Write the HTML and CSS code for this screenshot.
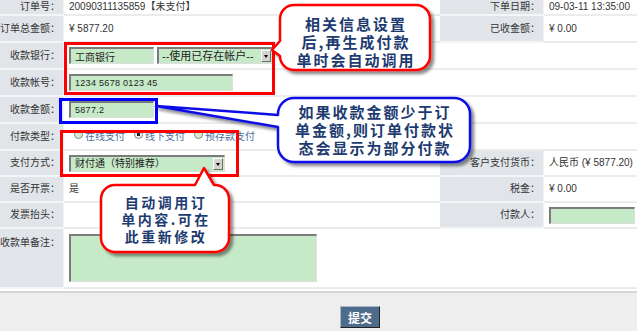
FILE: index.html
```html
<!DOCTYPE html>
<html lang="zh-CN">
	<head>
		<meta charset="UTF-8" />
		<title>收款单</title>
		<link rel="stylesheet" href="styles.css">
	</head>
	<body>
		<div class="page">
			<table class="form">
				<colgroup>
					<col class="col-label">
					<col class="col-value">
					<col class="col-label2">
					<col class="col-value2">
				</colgroup>
				<tr class="row-first">
					<th>订单号：</th>
					<td>20090311135859【未支付】</td>
					<th>下单日期：</th>
					<td>09-03-11 13:35:00</td>
				</tr>
				<tr>
					<th>订单总金额：</th>
					<td>¥ 5877.20</td>
					<th>已收金额：</th>
					<td>¥ 0.00</td>
				</tr>
				<tr>
					<th>收款银行：</th>
					<td colspan="3">
						<div class="bank-row">
							<input class="field field-bank" type="text" value="工商银行">
							<span class="select select-account"><span class="select-text">--使用已存在帐户--</span><span class="select-arrow"></span></span>
						</div>
					</td>
				</tr>
				<tr>
					<th>收款帐号：</th>
					<td colspan="3"><input class="field field-account mono" type="text" value="1234 5678 0123 45"></td>
				</tr>
				<tr>
					<th>收款金额：</th>
					<td colspan="3"><input class="field field-amount mono" type="text" value="5877.2"></td>
				</tr>
				<tr>
					<th>付款类型：</th>
					<td colspan="3">
						<div class="radios">
							<label class="radio"><input type="radio" name="paytype">在线支付</label>
							<label class="radio"><input type="radio" name="paytype" checked>线下支付</label>
							<label class="radio"><input type="radio" name="paytype">预存款支付</label>
						</div>
					</td>
				</tr>
				<tr class="row-short">
					<th>支付方式：</th>
					<td><span class="select select-method"><span class="select-text">财付通（特别推荐）</span><span class="select-arrow"></span></span></td>
					<th>客户支付货币：</th>
					<td>人民币 (¥ 5877.20)</td>
				</tr>
				<tr class="row-short">
					<th>是否开票：</th>
					<td>是</td>
					<th>税金：</th>
					<td>¥ 0.00</td>
				</tr>
				<tr class="row-short">
					<th>发票抬头：</th>
					<td></td>
					<th>付款人：</th>
					<td><input class="field field-payer" type="text" value=""></td>
				</tr>
				<tr class="row-note">
					<th>收款单备注：</th>
					<td colspan="3"><textarea class="field field-note"></textarea></td>
				</tr>
			</table>

			<div class="footer">
				<button class="btn-submit" type="button">提交</button>
			</div>

			<!-- highlight frames and callout bubbles drawn over the form -->
			<svg class="marks" width="637" height="331" viewBox="0 0 637 331">
				<defs>
					<filter id="shade" x="-10%" y="-10%" width="130%" height="140%">
						<feDropShadow dx="3" dy="3" stdDeviation="1.5" flood-color="#000" flood-opacity="0.45"/>
					</filter>
				</defs>
				<rect class="frame frame-red" x="65.5" y="43.5" width="208" height="50"/>
				<rect class="frame frame-blue" x="60.5" y="99.5" width="96" height="23"/>
				<rect class="frame frame-red" x="61.5" y="131.5" width="176" height="44"/>

				<path class="bubble bubble-red" filter="url(#shade)" d="M294,5 H416 A14,14 0 0 1 430,19 V56 A14,14 0 0 1 416,70 H294 A14,14 0 0 1 280,56 L272,50 L280,41 V19 A14,14 0 0 1 294,5 Z"/>
				<path class="bubble bubble-blue" filter="url(#shade)" d="M294,98 H454 A16,16 0 0 1 470,114 V146 A16,16 0 0 1 454,162 H294 A16,16 0 0 1 278,146 V127 L156,106 L278,115 V114 A16,16 0 0 1 294,98 Z"/>
				<path class="bubble bubble-red" filter="url(#shade)" d="M115,185 H195 L204,168 L214,185 H215 A14,14 0 0 1 229,199 V238 A14,14 0 0 1 215,252 H115 A14,14 0 0 1 101,238 V199 A14,14 0 0 1 115,185 Z"/>
			</svg>

			<div class="tip tip-top">相关信息设置<br>后,再生成付款<br>单时会自动调用</div>
			<div class="tip tip-amount">如果收款金额少于订<br>单金额,则订单付款状<br>态会显示为部分付款</div>
			<div class="tip tip-method">自动调用订<br>单内容.可在<br>此重新修改</div>
		</div>
	</body>
</html>
```

FILE: styles.css
```css
* {
	box-sizing: border-box;
}

body {
	margin: 0;
	font-family: "Liberation Sans", "Noto Sans CJK SC", sans-serif;
	font-size: 10px;
	color: #333;
	background: #fff;
}

.page {
	position: relative;
	width: 637px;
	height: 331px;
	overflow: hidden;
}

/* Form table */
.form {
	width: 637px;
	border-collapse: separate;
	border-spacing: 0;
	table-layout: fixed;
}

.col-label { width: 64px; }
.col-value { width: 376px; }
.col-label2 { width: 104px; }
.col-value2 { width: 93px; }

.form th,
.form td {
	height: 27px;
	padding: 0 0 0 5px;
	border-bottom: 2px solid #ececec;
	text-align: left;
	font-weight: normal;
	white-space: nowrap;
	overflow: hidden;
	vertical-align: middle;
	line-height: 12px;
}

.form th {
	background: #e1e5e9;
	text-align: right;
	padding: 0 3px 0 0;
	border-bottom-color: #f4f5f6;
	border-right: 1px solid #f2f2f2;
}

.form .row-first th,
.form .row-first td {
	height: 16px;
}

.form .row-short th,
.form .row-short td {
	height: 26px;
}

.form .row-note th,
.form .row-note td {
	height: 60px;
	vertical-align: top;
	padding-top: 5px;
}

.form .row-note th {
	padding-top: 8px;
}

/* Inputs */
.bank-row {
	display: flex;
	align-items: center;
	gap: 3px;
}

.field {
	display: inline-block;
	vertical-align: middle;
	height: 17px;
	margin: 0;
	padding: 0 4px;
	background: #c6eac8;
	border-style: solid;
	border-width: 2px 1px 1px 2px;
	border-color: #7b7b7b #dedede #dedede #7b7b7b;
	font-family: "Liberation Sans", "Noto Sans CJK SC", sans-serif;
	font-size: 10px;
	color: #222;
	outline: none;
}

.mono {
	font-size: 9px;
	letter-spacing: 0.3px;
}

.field-bank { width: 85px; }
.field-account { width: 164px; }
.field-amount { width: 85px; }
.field-payer { width: 86px; }

.field-note {
	display: block;
	width: 248px;
	height: 48px;
	resize: none;
}

.select {
	position: relative;
	display: inline-block;
	vertical-align: middle;
	height: 17px;
	padding: 0 14px 0 4px;
	background: #c6eac8;
	border-style: solid;
	border-width: 2px 1px 1px 2px;
	border-color: #7b7b7b #dedede #dedede #7b7b7b;
	line-height: 14px;
	color: #222;
}

.select-text {
	display: block;
	overflow: hidden;
	white-space: nowrap;
}

.select-account {
	width: 116px;
	font-size: 11px;
	padding-left: 3px;
}

.select-method {
	width: 156px;
}

.select-arrow {
	position: absolute;
	right: 1px;
	top: 1px;
	width: 10px;
	height: 12px;
	background: #d6d3ce;
	border: 1px solid;
	border-color: #fff #6f6f6f #6f6f6f #fff;
}

.select-arrow::after {
	content: "";
	position: absolute;
	left: 2px;
	top: 4px;
	border-style: solid;
	border-width: 3px 2px 0 2px;
	border-color: #000 transparent transparent transparent;
}

/* Radios */
.radios {
	display: flex;
	align-items: center;
	gap: 9px;
	padding-left: 5px;
	color: #4a6b9c;
}

.radio {
	display: flex;
	align-items: center;
	gap: 2px;
}

.radio input {
	appearance: none;
	-webkit-appearance: none;
	width: 9px;
	height: 9px;
	margin: 0 0 4px 0;
	border-radius: 50%;
	border: 1px solid #7d8a7d;
	background: #d3ecd3;
}

.radio input:checked {
	background: radial-gradient(circle, #222 0 1.6px, #e8f3e8 2px);
}

/* Footer */
.footer {
	margin-top: 2px;
	height: 60px;
	background: #eeeeee;
	border-top: 2px solid #d6d6d6;
	padding: 13px 0 0 340px;
}

.btn-submit {
	width: 40px;
	height: 22px;
	padding: 0;
	background: #4d6c8b;
	color: #fff;
	font-family: "Noto Sans CJK SC", sans-serif;
	font-size: 12px;
	font-weight: bold;
	border: 1px solid;
	border-color: #a8b8c8 #222 #222 #a8b8c8;
}

/* Annotation layer */
.marks {
	position: absolute;
	left: 0;
	top: 0;
	pointer-events: none;
}

.frame {
	fill: none;
	stroke-width: 3;
}

.frame-red { stroke: #ff0000; }
.frame-blue { stroke: #0000ff; }

.bubble {
	fill: #fff;
	stroke-width: 2.5;
	stroke-linejoin: round;
}

.bubble-red { stroke: #ff0000; }
.bubble-blue { stroke: #1010e6; }

.tip {
	position: absolute;
	display: flex;
	align-items: center;
	justify-content: center;
	text-align: center;
	font-family: "Noto Sans CJK SC", sans-serif;
	font-weight: bold;
	color: #1d3b70;
	white-space: nowrap;
}

.tip-top {
	left: 280px;
	top: 9px;
	width: 150px;
	height: 65px;
	font-size: 15px;
	line-height: 18px;
	letter-spacing: 2px;
	padding-left: 2px;
}

.tip-amount {
	left: 278px;
	top: 98px;
	width: 192px;
	height: 64px;
	font-size: 15px;
	line-height: 18px;
	letter-spacing: 2px;
	padding-left: 2px;
}

.tip-method {
	left: 101px;
	top: 186px;
	width: 128px;
	height: 67px;
	font-size: 14px;
	line-height: 17px;
	letter-spacing: 2.5px;
	padding-left: 2px;
}
```
